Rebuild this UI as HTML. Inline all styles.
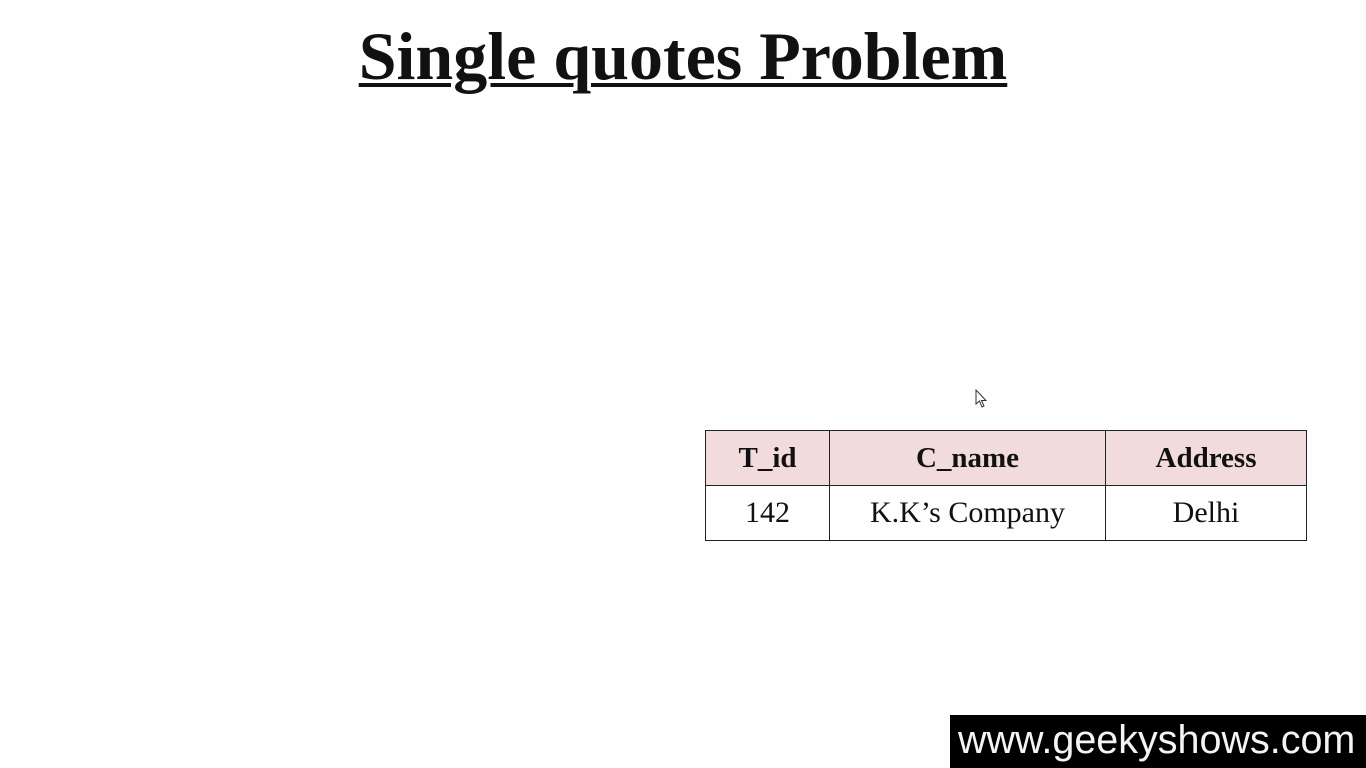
<!DOCTYPE html>
<html><head><style>
body{margin:0;width:1366px;height:768px;background:#fefefe;position:relative;overflow:hidden;font-family:"Liberation Serif",serif}
h1{position:absolute;top:12px;left:0;width:1366px;text-align:center;margin:0;font-size:68px;font-weight:bold;line-height:88px;text-decoration:underline;text-decoration-thickness:4px;text-underline-offset:4px;color:#111}
table{position:absolute;left:705px;top:430px;border-collapse:collapse;font-size:30px;color:#111}
td{border:1.5px solid #222;text-align:center;height:54px;padding:0}
tr.h td{background:#f2dcdb;font-weight:bold;font-size:29px}
.w{position:absolute;left:950px;top:715px;width:416px;height:53px;background:#000;color:#f4f4f4;font-family:"Liberation Sans",sans-serif;font-size:39.5px;line-height:50px;padding-left:8px;box-sizing:border-box;white-space:nowrap}
</style></head><body>
<h1>Single quotes Problem</h1>
<table>
<tr class="h"><td style="width:123px">T_id</td><td style="width:275px">C_name</td><td style="width:200px">Address</td></tr>
<tr><td>142</td><td>K.K’s Company</td><td>Delhi</td></tr>
</table>
<svg style="position:absolute;left:975px;top:389px" width="14" height="20"><path d="M1 1 L1 15 L4.5 12 L7 18 L9 17 L6.5 11.5 L11 11.5 Z" fill="#fff" stroke="#333" stroke-width="1"/></svg>
<div class="w">www.geekyshows.com</div>
</body></html>
